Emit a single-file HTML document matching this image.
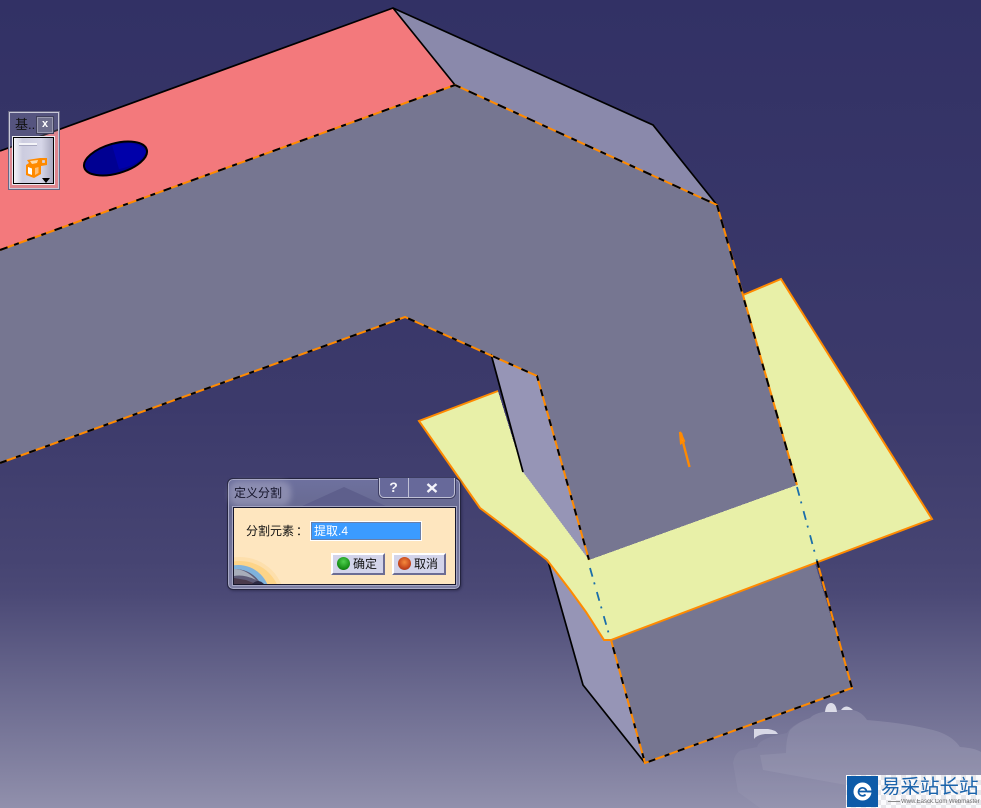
<!DOCTYPE html>
<html>
<head>
<meta charset="utf-8">
<style>
html,body{margin:0;padding:0;width:981px;height:808px;overflow:hidden;background:#323165}
body{position:relative;font-family:"Liberation Sans","Noto Sans CJK SC",sans-serif}
.a{position:absolute;box-sizing:border-box}
svg{display:block}
</style>
</head>
<body>
<svg class="a" style="left:0;top:0" width="981" height="808" viewBox="0 0 981 808">
<defs>
<linearGradient id="bg" x1="0" y1="0" x2="0" y2="1">
<stop offset="0" stop-color="#323165"/>
<stop offset="0.5" stop-color="#3c3a6b"/>
<stop offset="0.693" stop-color="#464472"/>
<stop offset="0.735" stop-color="#4b4976"/>
<stop offset="0.858" stop-color="#6b6a8f"/>
<stop offset="0.94" stop-color="#807f9f"/>
<stop offset="1" stop-color="#9190ac"/>
</linearGradient>
</defs>
<rect width="981" height="808" fill="url(#bg)"/>

<g shape-rendering="crispEdges">
<!-- yellow sheet behind -->
<polygon points="419,421 498,391 523,472 589,560 797,485 743,295 781,279 932,519 611,640 604,640 586,612 570,590 547,560 513,533 480,508" fill="#e8f0a8"/>

<!-- side faces -->
<polygon points="393,8 653,125 717,205 455,85" fill="#8a89ab"/>
<polygon points="490,353 537,376 589,560 523,472" fill="#9695b6"/>
<polygon points="548,561 570,590 586,612 604,640 611,640 645,763 583,685" fill="#9695b6"/>

<!-- pink -->
<polygon points="393,8 455,85 0,250 0,151" fill="#f3797c"/>

<!-- grey faces -->
<polygon points="0,250 455,85 717,205 797,485 589,560 537,376 405,317 0,463" fill="#767691"/>
<polygon points="611,640 815,563 852,688 645,763" fill="#767691"/>

<!-- yellow band on top -->
<polygon points="589,560 797,485 817,561 611,640 604,640 586,612" fill="#e8f0a8"/>
</g>

<!-- black silhouette edges -->
<g fill="none" stroke="#000" stroke-width="1.700">
<polyline points="0,151 393,8 653,125 717,205"/>
<line x1="393" y1="8" x2="455" y2="85"/>
<polyline points="491,354 523,472"/>
<polyline points="548,561 583,685 645,763"/>
</g>

<!-- orange edges -->
<g fill="none" stroke="#ff8a00" stroke-width="2">
<polyline points="0,250 455,85 717,205 743,295"/>
<polyline points="743,295 781,279 932,519 611,640 604,640 586,612 570,590 547,560 513,533 480,508 419,421 498,391"/>
<polyline points="0,463 405,317 537,376 589,560"/>
<polyline points="743,295 797,485"/>
<polyline points="817,561 852,688 645,763 611,640"/>
</g>

<!-- black dashes -->
<g fill="none" stroke="#000" stroke-width="2">
<polyline points="0,250 455,85" stroke-dasharray="8 7 5 9"/>
<polyline points="455,85 717,205" stroke-dasharray="6 9 9 8"/>
<polyline points="0,463 405,317 537,376 589,560" stroke-dasharray="7 10 5 9"/>
<polyline points="717,205 797,485" stroke-dasharray="7 8 9 9"/>
<polyline points="817,561 852,688 645,763 611,640" stroke-dasharray="7 9 5 10"/>
</g>

<!-- blue axis -->
<g fill="none" stroke="#1a6eaa" stroke-width="1.800" stroke-dasharray="9 6 2 8">
<line x1="590" y1="568" x2="610" y2="638"/>
<line x1="797" y1="487" x2="817" y2="561"/>
</g>

<!-- arrow -->
<path d="M681,433 L684,446 L689.500,467" fill="none" stroke="#ff8a00" stroke-width="2.400"/>
<path d="M680,432 L684,441 L681,443 Z" fill="#ff9a20" stroke="#ff8a00" stroke-width="2.200"/>

<!-- hole -->
<ellipse cx="115.500" cy="158.500" rx="32.500" ry="15" transform="rotate(-16 115.500 158.500)" fill="#000092" stroke="#000" stroke-width="2"/>
<path d="M112,145 L119,169 Q140,165 146,152 Q144,146 130,143 Z" fill="#0000aa"/>

<!-- watermark cloud -->
<path d="M733,763 Q735,752 742,750 L757,747 Q759,738 787,733 Q792,724 810,718 Q815,712 835,710 L853,710 Q862,712 867,720 Q905,723 933,730 Q952,735 960,747 Q975,748 981,752 L981,808 L760,808 L738,792 Z" fill="#b8b8cc" fill-opacity="0.1"/>
<path d="M786,753 Q786,738 790,730 Q798,722 810,718 Q815,712 835,710 L853,710 Q862,712 867,720 Q905,723 933,730 Q952,735 960,747 Q975,748 981,752 L981,775 L846,775 L846,785 L763,770 L760,755 Z" fill="#b8b8cc" fill-opacity="0.16"/>
<path d="M754,739 V729 H768 Q776,730 778,734 L765,734 Q757,735 754,739 Z" fill="#d8d8e6"/>
<path d="M825,712 Q826,703 831,703 Q836,703 837,712 Z M841,710 Q846,703 853,710 Z" fill="#dcdce8"/>
</svg>

<!-- toolbar -->
<div class="a" style="left:9px;top:112px;width:50px;height:77px;background:rgba(170,170,190,.28);border:1px solid #c9c9d9;box-shadow:0 0 0 1px #666684"></div>
<div class="a" style="left:15px;top:117px;font-size:13px;line-height:15px;color:#111;width:22px;overflow:hidden;white-space:nowrap">基..</div>
<div class="a" style="left:36px;top:116px;width:18px;height:18px;background:#6e6e8c;border:1px solid #3f3f5a;box-shadow:inset 0 0 0 1px #9a9ab0;color:#fff;font-size:11px;font-weight:bold;line-height:15px;text-align:center">x</div>
<div class="a" style="left:13px;top:137px;width:41px;height:47px;background:linear-gradient(90deg,#f4f4f8,#ccccdf 22%,#d6d6e8 70%,#a9a9bf);border:1px solid #000;box-shadow:0 0 0 1px #ebebf2"></div>
<div class="a" style="left:19px;top:143px;width:18px;height:3px;background:#f4f4f8;border-bottom:1px solid #a8a8c0"></div>
<svg class="a" style="left:25px;top:157px" width="23" height="22" viewBox="0 0 23 22">
<path d="M1,8 L4,6 L2,3 L15,1 L22,1 V8 L16,9 V17 L9,21 L1,18 Z" fill="#ff8a00"/>
<path d="M3,10 L7,11.500 V18 L3,16.500 Z" fill="#fff"/>
<path d="M5,4 L13,3 L12,6 L7,7 Z" fill="#ffd9a8"/>
<path d="M10,11 L13.500,10 V16 L10,18 Z" fill="#ffc078"/>
<rect x="16.500" y="2.500" width="4" height="4" fill="#d6d6e8" stroke="#ff8a00" stroke-width="1.300"/>
</svg>
<div class="a" style="left:42px;top:178px;width:0;height:0;border-left:4px solid transparent;border-right:4px solid transparent;border-top:5px solid #000"></div>

<!-- dialog -->
<div class="a" style="left:227px;top:478px;width:234px;height:112px;border-radius:6px;background:linear-gradient(180deg,#6e719f,#67698f 30%,#7f80a4);border:1px solid #24243f;box-shadow:inset 0 0 0 1px #a8a9c6,1px 1px 2px rgba(30,30,60,.5)"></div>
<svg class="a" style="left:300px;top:485px" width="90" height="22"><polygon points="0,22 44,2 88,22" fill="#5e5f8c"/></svg>
<div class="a" style="left:229px;top:481px;width:62px;height:25px;border-radius:10px;background:rgba(165,165,195,.55);filter:blur(3px)"></div>
<div class="a" style="left:234px;top:485px;font-size:12px;line-height:16px;color:#14142a">定义分割</div>
<div class="a" style="left:379px;top:478px;width:76px;height:20px;border:1px solid #c0c1d6;border-top:0;border-radius:0 0 5px 5px;background:#67699a;box-shadow:0 0 0 1px #3c3c62"></div>
<div class="a" style="left:408px;top:478px;width:1px;height:20px;background:#c0c1d6"></div>
<div class="a" style="left:379px;top:479px;width:29px;text-align:center;font-size:14px;font-weight:bold;line-height:17px;color:#f4f4fa">?</div>
<svg class="a" style="left:426px;top:483px" width="12" height="10"><path d="M1.500,1 L10.500,9 M10.500,1 L1.500,9" stroke="#f4f4fa" stroke-width="2.400"/></svg>

<div class="a" style="left:233px;top:507px;width:223px;height:78px;background:#fee6bf;border:1px solid #16162c;box-shadow:0 0 0 1px #a5a6c4;overflow:hidden">
<svg class="a" style="left:0;top:28px" width="60" height="48" viewBox="0 0 60 48">
<circle cx="6" cy="66" r="45" fill="#fddfac"/>
<circle cx="6" cy="66" r="41" fill="#fdd488"/>
<circle cx="4" cy="61" r="32" fill="#7fb2dc"/>
<circle cx="1" cy="63" r="30" fill="#5f5c78"/>
<path d="M0,33 Q12,33 22,44 Q10,38 0,40 Z" fill="#a7adba"/>
<path d="M0,42 L12,44 L22,48 L0,48 Z" fill="#4a3a4c"/>
<path d="M18,48 Q24,42 30,48 Z" fill="#2d2a44"/>
</svg>
</div>
<div class="a" style="left:246px;top:523px;font-size:12px;line-height:16px;color:#111;white-space:nowrap">分割元素<span style="margin-left:2px">：</span></div>
<div class="a" style="left:310px;top:521px;width:112px;height:20px;background:#3b9bff;border:1px solid #fff;box-shadow:0 0 0 1px #6a7fa8 inset;color:#fff;font-size:12px;line-height:18px;padding-left:3px">提取.4</div>

<div class="a" style="left:331px;top:553px;width:54px;height:22px;background:#d3d4ea;border-top:2px solid #fff;border-left:2px solid #fff;border-right:2px solid #6c6d94;border-bottom:2px solid #6c6d94"></div>
<div class="a" style="left:337px;top:557px;width:13px;height:13px;border-radius:50%;background:radial-gradient(circle at 50% 35%,#4fd04f,#128a12 70%,#0b4a0b)"></div>
<div class="a" style="left:353px;top:556px;font-size:12px;line-height:16px;color:#111">确定</div>
<div class="a" style="left:392px;top:553px;width:54px;height:22px;background:#d3d4ea;border-top:2px solid #fff;border-left:2px solid #fff;border-right:2px solid #6c6d94;border-bottom:2px solid #6c6d94"></div>
<div class="a" style="left:398px;top:557px;width:13px;height:13px;border-radius:50%;background:radial-gradient(circle at 50% 40%,#f58a3c,#c2401a 65%,#6a5a6a)"></div>
<div class="a" style="left:414px;top:556px;font-size:12px;line-height:16px;color:#111">取消</div>

<!-- logo -->
<div class="a" style="left:846px;top:775px;width:135px;height:33px;background:repeating-conic-gradient(#e6e6ea 0 25%,#fbfbfd 0 50%) 0 0/10px 10px"></div>
<div class="a" style="left:847px;top:776px;width:31px;height:31px;background:#0d5ba8"></div>
<svg class="a" style="left:852px;top:781px;filter:blur(.3px)" width="21" height="21" viewBox="0 0 21 21">
<circle cx="10.500" cy="10.500" r="9" fill="#fff"/>
<path d="M6.500,10.500 H14.500 A4,4 0 1 0 13.500,13.500" fill="none" stroke="#0d5ba8" stroke-width="1.700"/>
<path d="M15,9.500 H20 V11.500 H15 Z" fill="#0d5ba8"/>
</svg>
<div class="a" style="left:881px;top:775px;font-size:19.500px;line-height:24px;color:#1a63ab;white-space:nowrap;filter:blur(.3px)">易采站长站</div>
<div class="a" style="left:888px;top:801px;width:12px;height:1px;background:#8a8a8a"></div>
<div class="a" style="left:901px;top:798px;width:80px;overflow:hidden;font-size:6px;line-height:8px;color:#666;white-space:nowrap;filter:blur(.3px)">Www.Easck.Com Webmaster</div>
</body>
</html>
